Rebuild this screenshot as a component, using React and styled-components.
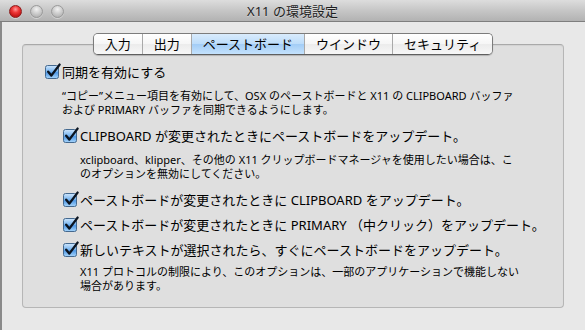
import React from 'react';
import styled, { createGlobalStyle } from 'styled-components';

const tabs = ['入力', '出力', 'ペーストボード', 'ウインドウ', 'セキュリティ'];

const GlobalStyle = createGlobalStyle`
  html, body {
    margin: 0;
    padding: 0;
    background: #e8e8e8;
  }
  body {
    font-family: "Noto Sans", "Noto Sans CJK JP", sans-serif;
    color: #000;
  }
`;

const CheckMark = () => (
  <CheckSvg viewBox="0 0 16 16" width="16" height="16">
    <defs>
      <linearGradient id="aquaFill" x1="0" y1="0" x2="0" y2="1">
        <stop offset="0" stopColor="#cfe6fc" />
        <stop offset="0.45" stopColor="#7ab6f0" />
        <stop offset="0.55" stopColor="#4f98e6" />
        <stop offset="1" stopColor="#a8d6fb" />
      </linearGradient>
    </defs>
    <rect x="0.5" y="1.5" width="13" height="13" rx="2" fill="url(#aquaFill)" stroke="#44698f" />
    <path d="M3.2 7.8 L6.3 11.6 L14.6 0.6" fill="none" stroke="#0b1420" strokeWidth="2.4" strokeLinecap="round" strokeLinejoin="round" />
  </CheckSvg>
);

const Option = ({ label, children }) => (
  <OptionBlock>
    <Row>
      <CheckMark />
      <Label>{label}</Label>
    </Row>
    {children}
  </OptionBlock>
);

const App = () => (
  <>
    <GlobalStyle />
    <Window>
      <TitleBar>
        <Lights>
          <Light $color="red" />
          <Light />
          <Light />
        </Lights>
        <Title>X11 の環境設定</Title>
        <span />
      </TitleBar>
      <Body>
        <TabBar>
          {tabs.map((t, i) => (
            <Tab key={t} $active={i === 2} $first={i === 0}>
              {t}
            </Tab>
          ))}
        </TabBar>
        <GroupBox>
          <Option label="同期を有効にする">
            <Description $top={8}>
              “コピー”メニュー項目を有効にして、OSX のペーストボードと X11 の CLIPBOARD バッファ
              <br />
              および PRIMARY バッファを同期できるようにします。
            </Description>
          </Option>
          <SubList>
            <Option label="CLIPBOARD が変更されたときにペーストボードをアップデート。">
              <Description $top={8}>
                xclipboard、klipper、その他の X11 クリップボードマネージャを使用したい場合は、こ
                <br />
                のオプションを無効にしてください。
              </Description>
            </Option>
            <Spacer $h={10} />
            <Option label="ペーストボードが変更されたときに CLIPBOARD をアップデート。" />
            <Spacer $h={7} />
            <Option label="ペーストボードが変更されたときに PRIMARY （中クリック）をアップデート。" />
            <Spacer $h={7} />
            <Option label="新しいテキストが選択されたら、すぐにペーストボードをアップデート。">
              <Description $top={6}>
                X11 プロトコルの制限により、このオプションは、一部のアプリケーションで機能しない
                <br />
                場合があります。
              </Description>
            </Option>
          </SubList>
        </GroupBox>
      </Body>
    </Window>
  </>
);

const Window = styled.div`
  width: 585px;
  height: 330px;
  display: flex;
  flex-direction: column;
  overflow: hidden;
  background: #e8e8e8;
`;

const TitleBar = styled.div`
  height: 21px;
  flex-shrink: 0;
  display: grid;
  grid-template-columns: 1fr auto 1fr;
  align-items: center;
  background: linear-gradient(#dddddd, #c6c6c6 50%, #b2b2b2);
  border-bottom: 1px solid #7e7e7e;
`;

const Lights = styled.div`
  display: flex;
  gap: 8px;
  padding-left: 9px;
  padding-top: 1px;
`;

const Light = styled.span`
  width: 13px;
  height: 13px;
  border-radius: 50%;
  box-sizing: border-box;
  border: 1px solid ${p => (p.$color === 'red' ? '#8c1d1d' : '#9a9a9a')};
  background: ${p =>
    p.$color === 'red'
      ? 'radial-gradient(circle at 50% 30%, #ff9a9a 0, #f03a3a 35%, #c21414 75%, #e85050 100%)'
      : 'radial-gradient(circle at 50% 30%, #f2f2f2 0, #d2d2d2 40%, #b4b4b4 80%, #d4d4d4 100%)'};
  box-shadow: 0 1px 0 rgba(255, 255, 255, 0.4);
`;

const Title = styled.div`
  font-size: 13px;
  color: #1e1e1e;
  white-space: nowrap;
  text-shadow: 0 1px 0 rgba(255, 255, 255, 0.35);
`;

const Body = styled.div`
  flex: 1;
  border-left: 2px solid #8a8a8a;
  padding: 11px 21px 0 20px;
  display: flex;
  flex-direction: column;
`;

const TabBar = styled.div`
  position: relative;
  z-index: 1;
  align-self: center;
  display: flex;
  height: 22px;
  box-sizing: border-box;
  border: 1px solid #7c7c7c;
  border-bottom-color: #5f5f5f;
  border-radius: 5px;
  overflow: hidden;
  box-shadow: 0 1px 1px rgba(0, 0, 0, 0.2);
`;

const Tab = styled.div`
  padding: 0 11px;
  font-size: 13px;
  line-height: 20px;
  white-space: nowrap;
  color: #000;
  border-left: ${p => (p.$first ? 'none' : '1px solid #a9a9a9')};
  background: ${p =>
    p.$active
      ? 'linear-gradient(#d9ebfc, #bcdcfa 50%, #a3cdf6 52%, #c4e2fd)'
      : 'linear-gradient(#ffffff, #f6f6f6 50%, #ececec 52%, #f7f7f7)'};
`;

const GroupBox = styled.div`
  margin-top: -11px;
  height: 264px;
  box-sizing: border-box;
  background: #dfdfdf;
  border: 1px solid #b6b6b6;
  border-top-color: #a9a9a9;
  border-radius: 4px;
  box-shadow: inset 0 1px 1px rgba(0, 0, 0, 0.06);
  padding: 18px 0 0 22px;
`;

const OptionBlock = styled.div`
  display: flex;
  flex-direction: column;
`;

const Row = styled.div`
  display: flex;
  align-items: center;
  height: 18px;
`;

const CheckSvg = styled.svg`
  flex-shrink: 0;
  margin-right: 1px;
  overflow: visible;
`;

const Label = styled.span`
  font-size: 13px;
  line-height: 18px;
  white-space: nowrap;
`;

const Description = styled.p`
  margin: ${p => p.$top}px 0 0 17px;
  font-size: 11px;
  line-height: 14px;
  white-space: nowrap;
`;

const SubList = styled.div`
  margin: 10px 0 0 18px;
  display: flex;
  flex-direction: column;
`;

const Spacer = styled.div`
  height: ${p => p.$h}px;
`;

export default App;
